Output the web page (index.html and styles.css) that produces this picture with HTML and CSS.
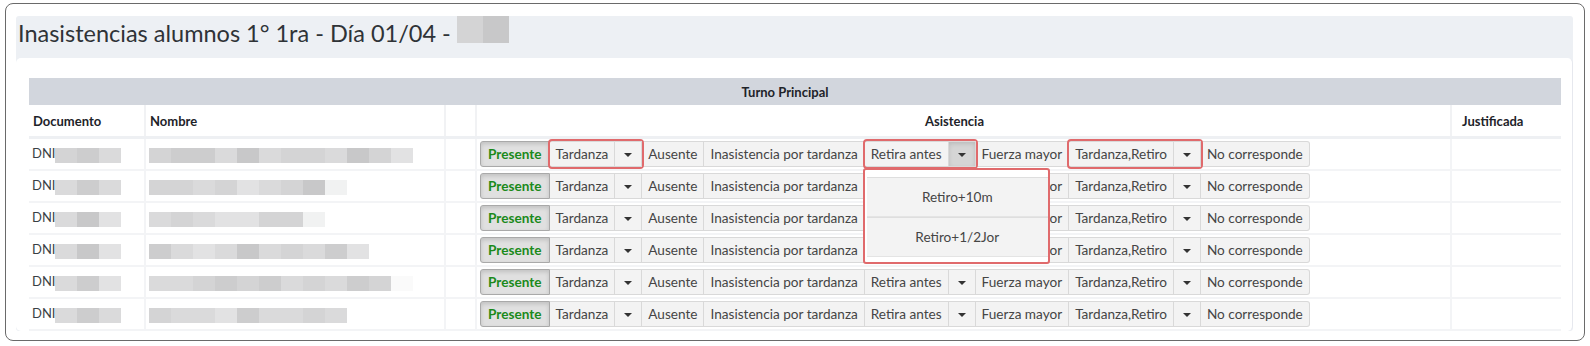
FILE: index.html
```html
<!DOCTYPE html>
<html lang="es">
<head>
    <meta charset="UTF-8">
    <meta name="viewport" content="width=device-width, initial-scale=1.0">
    <title>Inasistencias alumnos 1° 1ra</title>
    <link rel="stylesheet" href="styles.css">
</head>
<body>
<div class="window">
    <div class="panel">
        <h1 class="page-title">Inasistencias alumnos 1° 1ra - Día 01/04 - <span class="redact big"><i class="g2"></i><i class="g4"></i></span></h1>

        <div class="card">
            <table class="grid">
                <colgroup>
                    <col class="c-doc"><col class="c-name"><col class="c-blank"><col><col class="c-just">
                </colgroup>
                <thead>
                    <tr class="turno"><th colspan="5">Turno Principal</th></tr>
                    <tr class="cols">
                        <th>Documento</th>
                        <th>Nombre</th>
                        <th></th>
                        <th class="center">Asistencia</th>
                        <th class="just">Justificada</th>
                    </tr>
                </thead>
                <tbody>
                    <!-- fila 1: con las opciones marcadas -->
                    <tr>
                        <td>DNI<span class="redact"><i class="g2"></i><i class="g3"></i><i class="g1"></i></span></td>
                        <td><span class="redact"><i class="g2"></i><i class="g3"></i><i class="g3"></i><i class="g1"></i><i class="g4"></i><i class="g1"></i><i class="g2"></i><i class="g2"></i><i class="g1"></i><i class="g4"></i><i class="g2"></i><i class="g0"></i></span></td>
                        <td></td>
                        <td>
                            <div class="btn-group">
                                <button class="btn active present">Presente</button>
                                <span class="split hl"><button class="btn">Tardanza</button><button class="btn caret"></button></span>
                                <button class="btn">Ausente</button>
                                <button class="btn">Inasistencia por tardanza</button>
                                <span class="split hl">
                                    <button class="btn">Retira antes</button><button class="btn caret open"></button>
                                    <div class="dropdown">
                                        <a class="dd-item">Retiro+10m</a>
                                        <a class="dd-item">Retiro+1/2Jor</a>
                                    </div>
                                </span>
                                <button class="btn">Fuerza mayor</button>
                                <span class="split hl"><button class="btn">Tardanza,Retiro</button><button class="btn caret"></button></span>
                                <button class="btn last">No corresponde</button>
                            </div>
                        </td>
                        <td></td>
                    </tr>
                    <tr>
                        <td>DNI<span class="redact"><i class="g1"></i><i class="g3"></i><i class="g1"></i></span></td>
                        <td><span class="redact"><i class="g2"></i><i class="g2"></i><i class="g1"></i><i class="g2"></i><i class="g0"></i><i class="g1"></i><i class="g2"></i><i class="g4"></i><i class="g5"></i></span></td>
                        <td></td>
                        <td>
                            <div class="btn-group">
                                <button class="btn active present">Presente</button>
                                <span class="split"><button class="btn">Tardanza</button><button class="btn caret"></button></span>
                                <button class="btn">Ausente</button>
                                <button class="btn">Inasistencia por tardanza</button>
                                <span class="split"><button class="btn">Retira antes</button><button class="btn caret"></button></span>
                                <button class="btn">Fuerza mayor</button>
                                <span class="split"><button class="btn">Tardanza,Retiro</button><button class="btn caret"></button></span>
                                <button class="btn last">No corresponde</button>
                            </div>
                        </td>
                        <td></td>
                    </tr>
                    <tr>
                        <td>DNI<span class="redact"><i class="g1"></i><i class="g4"></i><i class="g0"></i></span></td>
                        <td><span class="redact"><i class="g1"></i><i class="g2"></i><i class="g1"></i><i class="g0"></i><i class="g0"></i><i class="g2"></i><i class="g2"></i><i class="g5"></i></span></td>
                        <td></td>
                        <td>
                            <div class="btn-group">
                                <button class="btn active present">Presente</button>
                                <span class="split"><button class="btn">Tardanza</button><button class="btn caret"></button></span>
                                <button class="btn">Ausente</button>
                                <button class="btn">Inasistencia por tardanza</button>
                                <span class="split"><button class="btn">Retira antes</button><button class="btn caret"></button></span>
                                <button class="btn">Fuerza mayor</button>
                                <span class="split"><button class="btn">Tardanza,Retiro</button><button class="btn caret"></button></span>
                                <button class="btn last">No corresponde</button>
                            </div>
                        </td>
                        <td></td>
                    </tr>
                    <tr>
                        <td>DNI<span class="redact"><i class="g1"></i><i class="g4"></i><i class="g0"></i></span></td>
                        <td><span class="redact"><i class="g3"></i><i class="g1"></i><i class="g0"></i><i class="g1"></i><i class="g4"></i><i class="g1"></i><i class="g2"></i><i class="g1"></i><i class="g3"></i><i class="g0"></i></span></td>
                        <td></td>
                        <td>
                            <div class="btn-group">
                                <button class="btn active present">Presente</button>
                                <span class="split"><button class="btn">Tardanza</button><button class="btn caret"></button></span>
                                <button class="btn">Ausente</button>
                                <button class="btn">Inasistencia por tardanza</button>
                                <span class="split"><button class="btn">Retira antes</button><button class="btn caret"></button></span>
                                <button class="btn">Fuerza mayor</button>
                                <span class="split"><button class="btn">Tardanza,Retiro</button><button class="btn caret"></button></span>
                                <button class="btn last">No corresponde</button>
                            </div>
                        </td>
                        <td></td>
                    </tr>
                    <tr>
                        <td>DNI<span class="redact"><i class="g1"></i><i class="g3"></i><i class="g0"></i></span></td>
                        <td><span class="redact"><i class="g1"></i><i class="g1"></i><i class="g2"></i><i class="g3"></i><i class="g2"></i><i class="g3"></i><i class="g1"></i><i class="g2"></i><i class="g1"></i><i class="g3"></i><i class="g2"></i><i class="g6"></i></span></td>
                        <td></td>
                        <td>
                            <div class="btn-group">
                                <button class="btn active present">Presente</button>
                                <span class="split"><button class="btn">Tardanza</button><button class="btn caret"></button></span>
                                <button class="btn">Ausente</button>
                                <button class="btn">Inasistencia por tardanza</button>
                                <span class="split"><button class="btn">Retira antes</button><button class="btn caret"></button></span>
                                <button class="btn">Fuerza mayor</button>
                                <span class="split"><button class="btn">Tardanza,Retiro</button><button class="btn caret"></button></span>
                                <button class="btn last">No corresponde</button>
                            </div>
                        </td>
                        <td></td>
                    </tr>
                    <tr>
                        <td>DNI<span class="redact"><i class="g1"></i><i class="g3"></i><i class="g1"></i></span></td>
                        <td><span class="redact"><i class="g2"></i><i class="g1"></i><i class="g1"></i><i class="g0"></i><i class="g3"></i><i class="g1"></i><i class="g1"></i><i class="g2"></i><i class="g1"></i></span></td>
                        <td></td>
                        <td>
                            <div class="btn-group">
                                <button class="btn active present">Presente</button>
                                <span class="split"><button class="btn">Tardanza</button><button class="btn caret"></button></span>
                                <button class="btn">Ausente</button>
                                <button class="btn">Inasistencia por tardanza</button>
                                <span class="split"><button class="btn">Retira antes</button><button class="btn caret"></button></span>
                                <button class="btn">Fuerza mayor</button>
                                <span class="split"><button class="btn">Tardanza,Retiro</button><button class="btn caret"></button></span>
                                <button class="btn last">No corresponde</button>
                            </div>
                        </td>
                        <td></td>
                    </tr>
                </tbody>
            </table>
        </div>
    </div>
</div>
</body>
</html>
```

FILE: styles.css
```css
body {
    margin: 0;
    background: white;
    font-family: Lato, "Noto Sans", sans-serif;
    color: #333;
}
.window {
    box-sizing: border-box;
    margin: 3px 5px 0 5px;
    height: 338px;
    border: 1.5px solid #6a6a6a;
    border-radius: 8px;
    padding: 12px 11px 0 10px;
    overflow: hidden;
}
.panel {
    background: #edf0f4;
    border-radius: 3px;
}
.page-title {
    margin: 0;
    height: 42px;
    padding: 3px 0 0 2px;
    box-sizing: border-box;
    font-size: 23.5px;
    font-weight: normal;
    line-height: 28px;
    color: #2f3337;
    display: flex;
    align-items: flex-start;
}
.page-title .redact {
    margin: -3px 0 0 6px;
    height: 27px;
}
.card {
    background: white;
    border-radius: 5px;
    border-right: 1px solid #e6e8ee;
    padding: 20px 11px 0 13px;
}

/* tabla */
.grid {
    width: 100%;
    border-collapse: collapse;
    font-size: 13px;
}
.c-doc { width: 116px; }
.c-name { width: 300px; }
.c-blank { width: 31px; }
.c-just { width: 110px; }
.grid th {
    font-weight: bold;
    text-align: left;
    color: #1e2329;
    padding: 0 4px;
}
.grid .turno th {
    background: #d2d6dd;
    height: 27px;
    text-align: center;
    padding-right: 24px;
}
.grid .cols th {
    height: 31px;
    border-right: 2px solid #f1f2f4;
    border-bottom: 3px solid #eef0f3;
}
.grid .cols th.center {
    text-align: center;
    padding-right: 22px;
}
.grid .cols th.just { padding-left: 10px; }
.grid th:last-child,
.grid td:last-child { border-right: none; }
.grid td {
    height: 30px;
    padding: 0 3px;
    border-right: 2px solid #f3f4f6;
    border-bottom: 2px solid #f3f4f6;
    color: #3a3f45;
    white-space: nowrap;
}

/* datos ocultos */
.redact {
    display: inline-flex;
    vertical-align: middle;
    height: 15px;
}
.redact i {
    display: block;
    width: 22px;
    height: 100%;
}
.big i { width: 26px; }
.g0 { background: #e2e2e3; }
.g1 { background: #dadadb; }
.g2 { background: #d4d4d5; }
.g3 { background: #cdcdce; }
.g4 { background: #c8c8c9; }
.g5 { background: #f1f2f2; }
.g6 { background: #fafafa; }

/* botones */
.btn-group {
    display: inline-flex;
    align-items: stretch;
    height: 26px;
    position: relative;
}
.split {
    display: inline-flex;
    position: relative;
}
.btn {
    font-family: inherit;
    font-size: 13.6px;
    color: #454545;
    background: #f3f3f3;
    border: 1px solid #d9d9d9;
    border-left: none;
    padding: 0 6px;
    margin: 0;
    height: 26px;
    cursor: pointer;
}
.btn.active {
    background: #e0e0e0;
    border: 1px solid #a9a9a9;
    border-radius: 3px 0 0 3px;
    box-shadow: inset 0 2px 4px rgba(0, 0, 0, 0.14);
}
.present {
    color: #1b8a1b;
    font-weight: bold;
    padding: 0 7px;
}
.btn.last { border-radius: 0 3px 3px 0; }
.caret {
    width: 27px;
    padding: 0;
    position: relative;
}
.caret::after {
    content: "";
    position: absolute;
    left: 50%;
    top: 50%;
    margin: -1px 0 0 -4px;
    border-left: 4px solid transparent;
    border-right: 4px solid transparent;
    border-top: 4px solid #333;
}
.caret.open {
    background: #d5d5d5;
    box-shadow: inset 0 2px 4px rgba(0, 0, 0, 0.12);
}

/* marcas rojas */
.hl {
    outline: 2px solid #e06a6c;
    outline-offset: 0;
    border-radius: 2px;
    z-index: 2;
}
.dropdown {
    position: absolute;
    top: 27px;
    left: -2px;
    width: 181px;
    background: white;
    border: 2px solid #e06a6c;
    border-radius: 3px;
    padding: 7px 0 5px 2px;
    z-index: 5;
}
.dd-item {
    display: block;
    height: 38px;
    line-height: 38px;
    text-align: center;
    font-size: 13.6px;
    color: #454545;
    background: #f3f3f3;
    border-top: 1px solid #dedede;
    border-bottom: 1px solid #e4e4e4;
}
```
